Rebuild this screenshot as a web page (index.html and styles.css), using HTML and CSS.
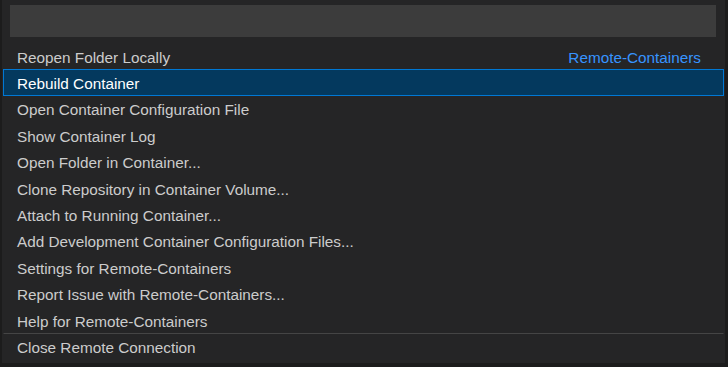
FILE: index.html
```html
<!DOCTYPE html>
<html>
<head>
<meta charset="utf-8">
<link rel="stylesheet" href="styles.css">
</head>
<body>
<div class="widget">
  <div class="input"></div>
  <div class="list">
    <div class="row"><span class="label">Reopen Folder Locally</span><span class="desc">Remote-Containers</span></div>
    <div class="row selected"><span class="label">Rebuild Container</span></div>
    <div class="row"><span class="label">Open Container Configuration File</span></div>
    <div class="row"><span class="label">Show Container Log</span></div>
    <div class="row"><span class="label">Open Folder in Container...</span></div>
    <div class="row"><span class="label">Clone Repository in Container Volume...</span></div>
    <div class="row"><span class="label">Attach to Running Container...</span></div>
    <div class="row"><span class="label">Add Development Container Configuration Files...</span></div>
    <div class="row"><span class="label">Settings for Remote-Containers</span></div>
    <div class="row"><span class="label">Report Issue with Remote-Containers...</span></div>
    <div class="row"><span class="label">Help for Remote-Containers</span></div>
    <div class="row separator"><span class="label">Close Remote Connection</span></div>
  </div>
</div>
</body>
</html>
```
FILE: styles.css
```css
html, body {
  margin: 0;
  padding: 0;
  background: #1c1c1c;
  width: 728px;
  height: 367px;
  overflow: hidden;
}
.widget {
  margin-left: 2px;
  width: 723px;
  height: 363px;
  background: #252526;
  box-sizing: border-box;
  padding-top: 5px;
  display: flex;
  flex-direction: column;
  font-family: "Liberation Sans", Arial, sans-serif;
  font-size: 15.3px;
  color: #cccccc;
}
.input {
  margin-left: 8px;
  width: 706px;
  height: 32px;
  background: #3c3c3c;
  flex: none;
}
.list {
  margin-top: 6px;
  margin-left: 1px;
  margin-right: 1px;
  display: flex;
  flex-direction: column;
}
.row {
  height: 26.4px;
  box-sizing: border-box;
  padding: 3px 22px 0 13px;
  display: flex;
  align-items: center;
  justify-content: space-between;
  border: 1px solid transparent;
  white-space: nowrap;
}
.row.selected {
  background: #04395e;
  border-color: #0078d4;
  color: #ffffff;
}
.row.separator {
  border-top-color: #454545;
}
.desc {
  color: #3794ff;
}
```
